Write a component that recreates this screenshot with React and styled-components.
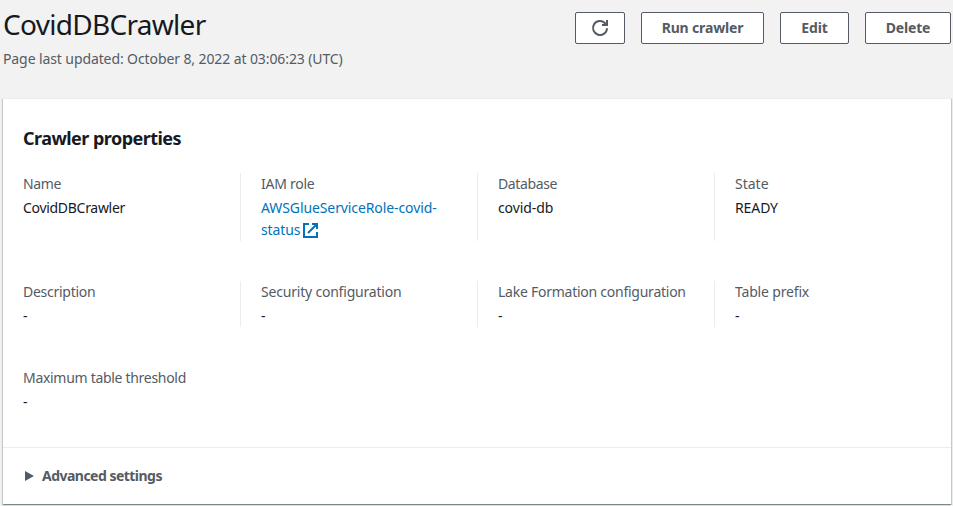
import React from "react";
import styled, { createGlobalStyle } from "styled-components";

const GlobalStyle = createGlobalStyle`
  * { box-sizing: border-box; }
  body {
    margin: 0;
    background: #f2f2f2;
    color: #16191f;
    font: 14px/22px "Noto Sans", "Open Sans", sans-serif;
    overflow: hidden;
  }
`;

const Page = styled.div`
  height: 506px;
  padding: 0 2px 0 3px;
`;

const Header = styled.header`
  display: flex;
  justify-content: space-between;
  height: 98px;
  padding-top: 6px;
`;

const Title = styled.h1`
  margin: 0;
  font-size: 28px;
  line-height: 36px;
  font-weight: 400;
  letter-spacing: -0.7px;
`;

const Updated = styled.p`
  margin: 6px 0 0;
  color: #545b64;
  letter-spacing: -0.1px;
`;

const Actions = styled.div`
  display: flex;
  gap: 16px;
  padding-top: 6px;
`;

const Button = styled.button`
  display: flex;
  align-items: center;
  justify-content: center;
  width: ${(p) => p.$width}px;
  height: 32px;
  padding: 0;
  border: 1px solid #545b64;
  border-radius: 2px;
  background: #fff;
  color: #545b64;
  font: 700 14px/22px "Noto Sans", "Open Sans", sans-serif;
  letter-spacing: -0.15px;
`;

const Panel = styled.section`
  height: 406px;
  background: #fff;
  border-top: 1px solid #eaeded;
  box-shadow: 0 1px 1px 0 rgba(0, 28, 36, 0.3), 1px 1px 1px 0 rgba(0, 28, 36, 0.15),
    -1px 1px 1px 0 rgba(0, 28, 36, 0.15);
`;

const Body = styled.div`
  height: 348px;
  padding: 28px 0 0;
`;

const PanelTitle = styled.h2`
  margin: 0 0 24px 20px;
  font-size: 18px;
  line-height: 22px;
  font-weight: 700;
  letter-spacing: -0.54px;
`;

const Grid = styled.div`
  display: grid;
  grid-template-columns: 237px 237px 237px 1fr;
  grid-template-rows: 68px 46px 46px;
  row-gap: 40px;
`;

const Cell = styled.div`
  padding-left: 20px;
  border-left: 1px solid ${(p) => (p.$first ? "transparent" : "#eaeded")};
  margin-left: ${(p) => (p.$first ? -1 : 0)}px;
`;

const Label = styled.div`
  color: #545b64;
  line-height: 22px;
  margin-bottom: 2px;
  letter-spacing: ${(p) => p.$track || 0}px;
`;

const Value = styled.div`
  line-height: 22px;
  white-space: nowrap;
  letter-spacing: ${(p) => p.$track || 0}px;
`;

const Link = styled.a`
  color: #0073bb;
`;

const Footer = styled.div`
  display: flex;
  align-items: center;
  height: 57px;
  padding-left: 22px;
  border-top: 1px solid #eaeded;
  color: #545b64;
  font-weight: 700;
  letter-spacing: -0.52px;
`;

const ExternalSvg = styled.svg`
  margin-left: 3px;
  vertical-align: -3px;
`;

const CaretSvg = styled.svg`
  margin-right: 8px;
`;

const RefreshIcon = () => (
  <svg width="18" height="18" viewBox="0 0 18 18" fill="none" stroke="currentColor" strokeWidth="2">
    <path d="M16 9.2a7 7 0 1 1-2.2-5.3L15.5 5.4" />
    <path d="M16 1v5h-5" />
  </svg>
);

const ExternalIcon = () => (
  <ExternalSvg width="15" height="15" viewBox="0 0 15 15" fill="none" stroke="currentColor" strokeWidth="2">
    <path d="M6 1H1v13h13V9" />
    <path d="M9 1h5v5M14 1 5 10" />
  </ExternalSvg>
);

const Caret = () => (
  <CaretSvg width="9" height="10" viewBox="0 0 9 10">
    <path d="M0 0 9 5 0 10z" fill="currentColor" />
  </CaretSvg>
);

const fields = [
  { label: "Name", value: "CovidDBCrawler", first: true, labelTrack: -0.4, valueTrack: -0.3 },
  {
    label: "IAM role",
    labelTrack: -0.25,
    valueTrack: -0.1,
    value: (
      <Link>
        AWSGlueServiceRole-covid-
        <br />
        status
        <ExternalIcon />
      </Link>
    ),
  },
  { label: "Database", value: "covid-db", labelTrack: -0.37, valueTrack: -0.1 },
  { label: "State", value: "READY", valueTrack: -0.1 },
  { label: "Description", value: "-", first: true, labelTrack: -0.27 },
  { label: "Security configuration", value: "-", labelTrack: -0.2 },
  { label: "Lake Formation configuration", value: "-", labelTrack: -0.25 },
  { label: "Table prefix", value: "-", labelTrack: -0.17 },
  { label: "Maximum table threshold", value: "-", first: true, labelTrack: -0.3 },
];

export default function App() {
  return (
    <Page>
      <GlobalStyle />
      <Header>
        <div>
          <Title>CovidDBCrawler</Title>
          <Updated>Page last updated: October 8, 2022 at 03:06:23 (UTC)</Updated>
        </div>
        <Actions>
          <Button $width={50} aria-label="Refresh">
            <RefreshIcon />
          </Button>
          <Button $width={123}>Run crawler</Button>
          <Button $width={69}>Edit</Button>
          <Button $width={86}>Delete</Button>
        </Actions>
      </Header>
      <Panel>
        <Body>
          <PanelTitle>Crawler properties</PanelTitle>
          <Grid>
            {fields.map((f) => (
              <Cell key={f.label} $first={f.first}>
                <Label $track={f.labelTrack}>{f.label}</Label>
                <Value $track={f.valueTrack}>{f.value}</Value>
              </Cell>
            ))}
          </Grid>
        </Body>
        <Footer>
          <Caret />
          Advanced settings
        </Footer>
      </Panel>
    </Page>
  );
}
